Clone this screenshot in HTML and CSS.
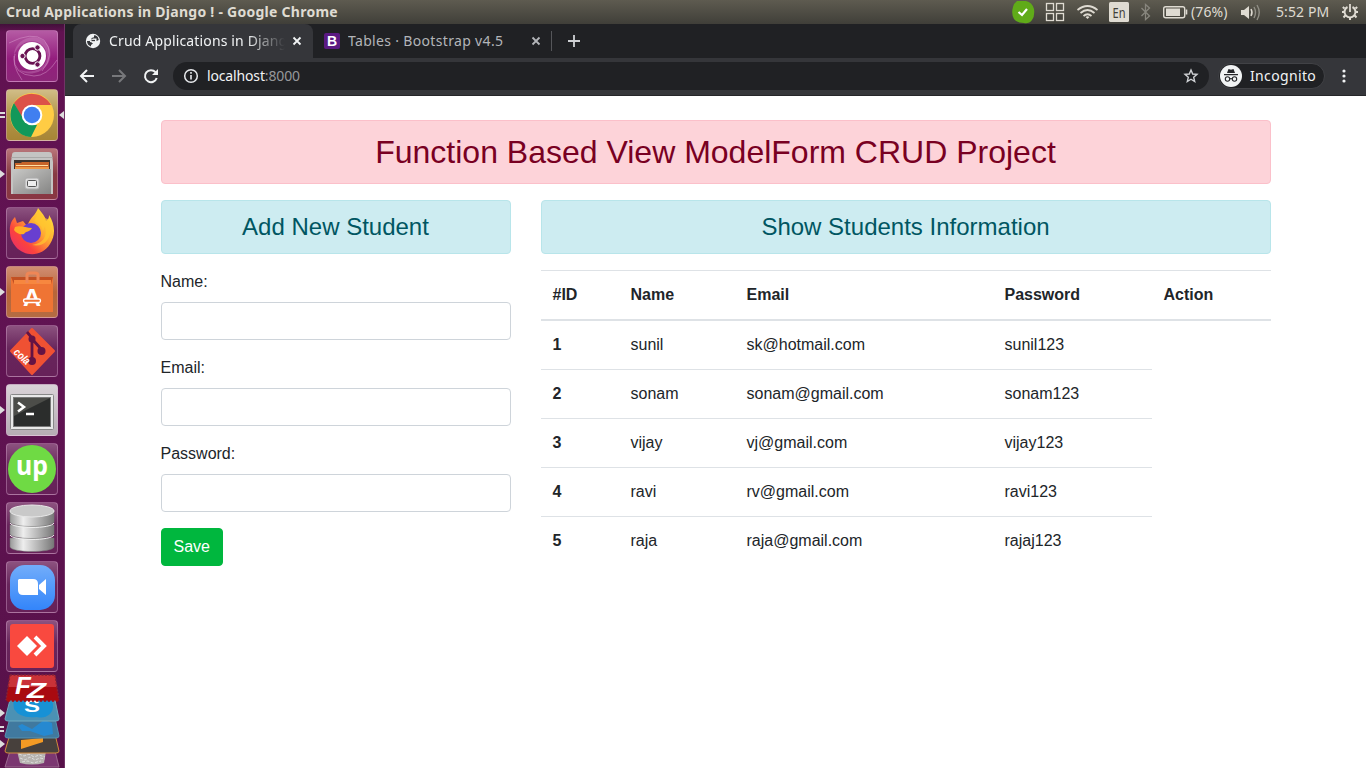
FILE: index.html
```html
<!DOCTYPE html>
<html lang="en">
<head>
<meta charset="utf-8">
<title>Crud Applications in Django !</title>
<link rel="stylesheet" href="styles.css">
</head>
<body>
<div class="desktop">
  <header class="panel">
    <span class="panel-title">Crud Applications in Django ! - Google Chrome</span>
    <svg class="panel-icons" width="180" height="24" viewBox="0 0 180 24">
      <path d="M6 1h9q6 1 8 8 1 7-2 11-3 4-8 3-7 0-10-4-3-5-1-12 1-4 4-6z" fill="#60ab19"/>
      <path d="M7.500 12l3.500 3 5-6" stroke="#fff" stroke-width="2.200" fill="none"/>
      <g fill="none" stroke="#dfdbd2" stroke-width="1.300"><rect x="35.500" y="3.500" width="7" height="7"/><rect x="45.500" y="3.500" width="7" height="7"/><rect x="35.500" y="13.500" width="7" height="7"/><rect x="45.500" y="13.500" width="7" height="7"/></g>
      <g fill="none" stroke="#dfdbd2" stroke-width="1.700"><path d="M66.500 10q10-8 20 0M69.500 13q7-6 14 0M72.500 16q4-3.500 8 0"/></g><path d="M74.500 17l2 2 2-2q-2-1.500-4 0z" fill="#dfdbd2"/>
      <rect x="98" y="2" width="20" height="20" rx="1.500" fill="#dfdbd2"/><text class="lang" x="101.500" y="17.500" textLength="13" lengthAdjust="spacingAndGlyphs">En</text>
      <path d="M130.500 8l8 8-4 3.500V4.500l4 3.500-8 8" fill="none" stroke="#88867e" stroke-width="1.300"/>
      <rect x="152.700" y="6.700" width="21" height="11" rx="2" fill="none" stroke="#dfdbd2" stroke-width="1.400"/><path d="M155 8.500h14v7.500h-14z" fill="#dfdbd2"/><path d="M175.500 9.500v5" stroke="#dfdbd2" stroke-width="1.600"/>
    </svg>
    <span class="battery">(76%)</span>
    <svg class="volume" width="22" height="24" viewBox="0 0 22 24"><path d="M1 10h3l5-4v13l-5-4H1z" fill="#dfdbd2"/><path d="M11 9q2 3.500 0 7" stroke="#dfdbd2" stroke-width="1.500" fill="none"/><path d="M14 7q3 5.500 0 11M17 5q4.500 7.500 0 15" stroke="#918f86" stroke-width="1.400" fill="none"/></svg>
    <span class="clock">5:52 PM</span>
    <svg class="gear" width="18" height="18" viewBox="0 0 18 18" fill="none" stroke="#dfdbd2"><path d="M6.500 4A5.500 5.500 0 1 0 11.500 4" stroke-width="2"/><path d="M9 1v8" stroke-width="1.800"/><path d="M3.500 5.500L1.800 4M3.200 9H1M4.300 12.500L2.500 14.500M9 14.500V17M13.700 12.500l1.800 2M14.800 9H17M14.500 5.500L16.200 4" stroke-width="2"/></svg>
  </header>
  <div class="workspace">
    <nav class="launcher">
      <div class="tile ubuntu"><svg viewBox="0 0 52 52"><path d="M8 25C9 5 38 0 44 20 48 40 24 50 12 39 20 44 40 42 41 27 41 8 16 4 8 25z" fill="#d592c9" opacity=".35"/><g fill="none" stroke="#dda5d3" stroke-width="1" opacity=".45"><path d="M3 13Q26 1 38 10 50 24 36 41M8 26Q7 45 28 46 41 46 51 30M16 50Q5 34 9 24"/></g><circle cx="26" cy="26" r="14" fill="#fff"/><circle cx="26.500" cy="26" r="7.400" fill="none" stroke="#691252" stroke-width="2.900"/><g fill="#691252" stroke="#fff"><circle cx="16.500" cy="26" r="2.700"/><circle cx="31.500" cy="17.500" r="2.700"/><circle cx="31.500" cy="34.500" r="2.700"/></g></svg></div>
      <div class="tile chrome"><i class="pips"></i><i class="active"></i><svg viewBox="0 0 52 52"><circle cx="26" cy="26" r="22" fill="#fc4"/><path d="M8 14A22 22 0 0 1 45 16H26L16 30z" fill="#dc5148"/><path d="M8 14l10 17 8 5 5 0-6 12A22 22 0 0 1 8 14z" fill="#12985a"/><circle cx="26" cy="26" r="10.300" fill="#fff"/><circle cx="26" cy="26" r="8.300" fill="#407ff0"/></svg></div>
      <div class="tile files"><i class="pip"></i><svg viewBox="0 0 52 52"><path d="M6 7q0-3 3-3h34q3 0 3 3l1 7v32H5V14z" fill="#c4c4c2"/><path d="M5.500 9.500h41" stroke="#a9a9a7"/><path d="M8 12h36v11H8z" fill="#3c332d"/><path d="M9 15h6l1-1h27v9H9z" fill="#c76429"/><path d="M10 17.500h32" stroke="#ffe0a2"/><path d="M9 19h34v3H9z" fill="#ed9847"/><path d="M7 21h38v25H7z" fill="url(#metal)"/><rect x="19" y="30" width="14" height="11" rx="2" fill="#ddd" stroke="#aaa"/><rect x="21.500" y="32.500" width="9" height="6" rx="1" fill="#eee" stroke="#555"/></svg></div>
      <div class="tile glass"><svg viewBox="0 0 52 52"><path d="M4 26C3 18 6 13 9 10l2 6 6-2 4 5C25 9 30 8 32 1c4 5 7 8 8 13 3-2 3-4 3-6 6 9 7 20 1 29-8 13-25 13-34 3C6 35 4 31 4 26z" fill="url(#fire)"/><circle cx="25" cy="26" r="10" fill="#683fd0"/><path d="M28 14q8 4 9 10l2-5q4 16-13 19 16 3 19-15 1-11-6-12-6-5-7-8-1 7-4 11z" fill="#ffc72f" opacity=".7"/><path d="M9 20c5-2 11 1 17 1-2 4-6 3-8 6-4 1-8-1-10-4" fill="#ffae26"/></svg></div>
      <div class="tile software"><i class="pip"></i><svg viewBox="0 0 52 52"><path d="M5 11h42v35H5z" fill="#ef7434"/><path d="M5 11h42l-2 7H8z" fill="#c25023"/><path d="M8 14h37v4H8z" fill="#f7873f"/><path d="M21 17V9q0-2 3-2h5q3 0 3 2v8" fill="none" stroke="#ef8656" stroke-width="3"/><text class="bag-letter" x="17" y="40" textLength="18" lengthAdjust="spacingAndGlyphs">A</text><rect x="17.500" y="33" width="17" height="3.500" rx="1.700" fill="#ef7434" stroke="#fff" stroke-width="1.400"/></svg></div>
      <div class="tile glass"><svg viewBox="0 0 52 52"><path d="M26 4l22 22-22 23L5 26z" fill="#ef5133" stroke="#ef5133" stroke-width="2" stroke-linejoin="round"/><path d="M21 7l5 6v23M27 15l9 10" fill="none" stroke="#651344" stroke-width="2.800"/><circle cx="26" cy="14" r="3.500" fill="#651344"/><circle cx="35.500" cy="26" r="4" fill="#651344"/><circle cx="26" cy="36" r="4" fill="#651344"/><text class="cola" x="7" y="28" transform="rotate(43 7 28)" textLength="18" lengthAdjust="spacingAndGlyphs">cola</text></svg></div>
      <div class="tile terminal"><i class="pip"></i><svg viewBox="0 0 52 52"><rect x="4.500" y="10.500" width="43" height="35" rx="1" fill="#e8e8e8" stroke="#888"/><rect x="7.500" y="13.500" width="37" height="29" fill="#2b2d2c" stroke="#777"/><path d="M8 14h36L8 32z" fill="#62625e" opacity=".6"/><path d="M12 18.500l6 4.500-6 4.500M20 30h8" fill="none" stroke="#fff" stroke-width="2.500"/></svg></div>
      <div class="tile glass"><svg viewBox="0 0 52 52"><circle cx="26" cy="26" r="24" fill="#6fda44"/><text class="up" x="10" y="32" textLength="32" lengthAdjust="spacingAndGlyphs">up</text></svg></div>
      <div class="tile glass"><svg viewBox="0 0 52 52"><g fill="url(#steel)" stroke="#777" stroke-width=".5"><path d="M4 36v9c2 6 42 6 44 0v-9z"/><path d="M4 23v9c2 6 42 6 44 0v-9z"/><path d="M4 9v11c2 6 42 6 44 0V9z"/></g><g fill="none" stroke="#eee"><path d="M4 21c3 6 41 6 44 0M4 33c3 6 41 6 44 0"/></g><ellipse cx="26" cy="9" rx="22" ry="6" fill="#c9c9c9" stroke="#e8e8e8"/></svg></div>
      <div class="tile glass"><svg viewBox="0 0 52 52"><rect x="4" y="4" width="45" height="45" rx="15" fill="url(#blue)"/><path d="M13 18h14q5 0 5 5v11H17q-5 0-5-5V19z" fill="#fff"/><path d="M33 24l7-6v16l-7-6z" fill="#fff"/></svg></div>
      <div class="tile glass"><svg viewBox="0 0 52 52"><rect x="4" y="4" width="44" height="44" rx="3" fill="#f9493f"/><path d="M11 26l10-10 10 10-10 10z" fill="#fff"/><path d="M29 17l9 9-9 9" fill="none" stroke="#fff" stroke-width="4"/></svg></div>
      <svg class="folded" width="65" height="96" viewBox="0 0 65 96">
        <path d="M10 78h45l4 16H5z" fill="#7b3771" stroke="#9b698f"/><path d="M17 78h29l-2 12q-12 3-24 0z" fill="#b7b3b0"/><path d="M19 81l5 2 5-2 5 3 5-2 6 2M20 85l5 2 5-3 5 3 5-2 5 1M22 89l6-1 5 2 8-2" stroke="#ddd" fill="none" stroke-dasharray="3 1.500"/>
        <path d="M10 61h45l4 17q0 2-3 2H8q-3 0-3-2z" fill="#47403c" stroke="#d38a3c"/><path d="M21 67l22-2v4l-22 7z" fill="#f49a24"/>
        <path d="M10 45h45l4 18q0 2-3 2H8q-3 0-3-2z" fill="#40799f" stroke="#5692af"/><path d="M18 53l4-2 10 5 12-9 8 3 1 11-9 2-14-5-8 0z" fill="#2689d1"/>
        <path d="M10 27h45l4 19q0 2-3 2H8q-3 0-3-2z" fill="#4b91b4" stroke="#70abc0"/><path d="M13 27h39q3 9-2 14-6 5-13 3-17 2-23-8z" fill="#1791d5"/><text class="skype" x="24" y="39" textLength="16" lengthAdjust="spacingAndGlyphs">S</text>
        <path d="M10 2h45l4 25q-2 4-4 0-2 4-4 0-2 4-4 0-2 4-4 0-2 4-4 0-2 4-4 0-2 4-4 0-2 4-4 0-2 4-4 0-2 4-4 0-2 4-4 0-2 4-4 0-2 4-5 0z" fill="#a90a10"/><path d="M10 2h45l2 12H8z" fill="#c93238"/><path d="M10 2h45l4 25M10 2L6 27" fill="none" stroke="#842236" stroke-width="1.500" stroke-dasharray="2 1.500"/>
        <text class="fz" transform="translate(15 23) scale(1.080 1)" x="0" y="-2">F</text><text class="fz fz-z" x="27" y="25" textLength="19" lengthAdjust="spacingAndGlyphs">Z</text>
        <g fill="#ddd"><path d="M0 36l5 4-5 4zM0 67l5 4-5 4z"/><path d="M0 53h4v2H0zM0 57h4v2H0z"/></g>
      </svg>
      <svg class="defs" width="0" height="0"><defs><linearGradient id="metal" x2="1" y2="1"><stop stop-color="#c8c8c6"/><stop offset="1" stop-color="#858584"/></linearGradient><linearGradient id="steel"><stop stop-color="#999"/><stop offset=".3" stop-color="#eee"/><stop offset="1" stop-color="#777"/></linearGradient><linearGradient id="fire" x1="1" x2="0" y2="1"><stop stop-color="#fff13c"/><stop offset=".4" stop-color="#ffac32"/><stop offset=".7" stop-color="#fb423e"/><stop offset="1" stop-color="#e42779"/></linearGradient><linearGradient id="blue" x2="0" y2="1"><stop stop-color="#72adfa"/><stop offset="1" stop-color="#3385fa"/></linearGradient></defs></svg>
    </nav>
    <section class="browser">
      <div class="tabstrip">
        <div class="tab selected"><svg width="16" height="16" viewBox="0 0 16 16"><circle cx="8" cy="8" r="7.200" fill="#f1f3f4"/><path d="M9 2.200v2L6.500 5v2L4.500 8H2q0 4 4 5.500V12l2-1.500L6.500 9l4-.5L13.800 7l-1-3-2-1.500z" fill="#35363a"/><path d="M8 5.500h3.500v3H13v3l-2 1.500-2.500.500V11L7 9.500 5 9V7.500z" fill="#f1f3f4"/><path d="M6.500 7.500h3.500" stroke="#35363a" stroke-width="1.300"/></svg><span class="tab-text fade">Crud Applications in Django</span><svg class="close" width="10" height="10" viewBox="0 0 10 10"><path d="M1.500 1.500l7 7m0-7l-7 7"/></svg></div>
        <div class="tab other"><b class="bootstrap">B</b><span class="tab-text">Tables · Bootstrap v4.5</span><svg class="close" width="10" height="10" viewBox="0 0 10 10"><path d="M1.500 1.500l7 7m0-7l-7 7"/></svg></div>
        <svg class="plus" width="12" height="12" viewBox="0 0 12 12"><path d="M6 0v12M0 6h12" stroke="#cfd1d4" stroke-width="1.800"/></svg>
      </div>
      <div class="toolbar">
        <svg class="nav-icons" width="86" height="16" viewBox="0 0 86 16" fill="none" stroke-width="2"><path d="M15 8H2m6-6L2 8l6 6" stroke="#f1f3f4"/><path d="M33 8h13m-6-6l6 6-6 6" stroke="#77787b"/><path d="M76.500 4.200A6 6 0 1 0 77.700 10" stroke="#f1f3f4"/><path d="M79 1v6h-6z" fill="#f1f3f4"/></svg>
        <div class="omnibox"><svg width="16" height="16" viewBox="0 0 16 16"><circle cx="8" cy="8" r="6.300" fill="none" stroke="#e8eaed" stroke-width="1.500"/><path d="M8 7v4.500M8 4v1.700" stroke="#e8eaed" stroke-width="1.600"/></svg><span class="url">localhost<i>:8000</i></span><svg class="star" width="16" height="16" viewBox="0 0 16 16"><path d="M8 2l1.700 4 4.300.400-3.300 2.900 1 4.200L8 11.200l-3.700 2.300 1-4.200L2 6.400 6.300 6z" fill="none" stroke="#cfd1d4" stroke-width="1.400"/></svg></div>
        <div class="incognito"><svg width="22" height="22" viewBox="0 0 22 22"><circle cx="11" cy="11" r="11" fill="#f1f3f4"/><path d="M7 8l1.500-4 2.500.700L13.500 4 15 8zM4 9h14v1.300H4z" fill="#25262a"/><g fill="none" stroke="#25262a" stroke-width="1.100"><circle cx="7.500" cy="14" r="2.200"/><circle cx="14.500" cy="14" r="2.200"/><path d="M9.700 14q1.300-1 2.600 0"/></g></svg><span>Incognito</span></div>
        <svg class="more" width="4" height="14" viewBox="0 0 4 14" fill="#f1f3f4"><circle cx="2" cy="2" r="1.600"/><circle cx="2" cy="7" r="1.600"/><circle cx="2" cy="12" r="1.600"/></svg>
      </div>
      <main class="page">
        <div class="container">
          <h2 class="alert danger">Function Based View ModelForm CRUD Project</h2>
          <div class="row">
            <form class="student-form">
              <h4 class="alert info">Add New Student</h4>
              <label for="name">Name:</label><input id="name" type="text">
              <label for="email">Email:</label><input id="email" type="email">
              <label for="password">Password:</label><input id="password" type="password">
              <button type="button">Save</button>
            </form>
            <section>
              <h4 class="alert info">Show Students Information</h4>
              <table>
                <colgroup><col class="c-id"><col class="c-name"><col class="c-email"><col class="c-pass"><col class="c-action"></colgroup>
                <thead><tr><th>#ID</th><th>Name</th><th>Email</th><th>Password</th><th>Action</th></tr></thead>
                <tbody>
                  <tr><th>1</th><td>sunil</td><td>sk@hotmail.com</td><td>sunil123</td></tr>
                  <tr><th>2</th><td>sonam</td><td>sonam@gmail.com</td><td>sonam123</td></tr>
                  <tr><th>3</th><td>vijay</td><td>vj@gmail.com</td><td>vijay123</td></tr>
                  <tr><th>4</th><td>ravi</td><td>rv@gmail.com</td><td>ravi123</td></tr>
                  <tr><th>5</th><td>raja</td><td>raja@gmail.com</td><td>rajaj123</td></tr>
                </tbody>
              </table>
            </section>
          </div>
        </div>
      </main>
    </section>
  </div>
</div>
</body>
</html>
```
FILE: styles.css
```css
* { box-sizing: border-box; }
body { margin: 0; overflow: hidden; font-family: "Liberation Sans", Arial, sans-serif; }
svg { display: block; flex: none; }
.desktop { width: 1366px; height: 768px; display: flex; flex-direction: column; overflow: hidden; }
.panel { height: 24px; flex: none; display: flex; align-items: center; background: linear-gradient(#5e5b50, #403f39); color: #dfdbd2; font: 14px/24px "Noto Sans", sans-serif; white-space: nowrap; padding-left: 6px; }
.panel-title { width: 1005px; font-weight: 700; font-size: 14px; letter-spacing: .26px; }
.panel-icons { flex: none; }
.lang { font: 14px "Noto Sans", sans-serif; fill: #403f39; }
.battery { width: 49px; font-size: 14px; letter-spacing: .1px; }
.volume { margin-right: 14px; }
.clock { width: 65px; letter-spacing: .1px; }
.workspace { flex: 1; display: flex; min-height: 0; }
.launcher { width: 65px; flex: none; display: flex; flex-direction: column; padding: 6px 0 0 6px; gap: 7px; background: linear-gradient(#42103a, #611251 8px, #601352 50%, #571149); border-right: 1px solid #713466; }
.tile { position: relative; width: 52px; height: 52px; flex: none; border: 1px solid rgba(220,170,210,.4); border-radius: 4px; }
.tile > svg { width: 52px; height: 52px; margin: -1px; }
.glass { background: linear-gradient(#8c527f, #68265c 45%, #672159); }
.ubuntu { background: linear-gradient(#b55ba4, #941e7e 55%, #8c2678); }
.chrome { background: linear-gradient(#d1bd87, #b3964a 50%, #a78536); }
.files { background: linear-gradient(#b87579, #873b43 50%, #893642); }
.software { background: linear-gradient(#d18e72, #b86539 50%, #b46c43); }
.terminal { background: linear-gradient(#d9d2d7, #b6adb4); }
.pip, .pips, .active { position: absolute; left: -7px; top: 21px; border: 4px solid transparent; border-left: 5px solid #ddd; border-right: 0; }
.pips { border: 0; width: 5px; height: 6px; top: 22px; border-top: 2px solid #ddd; border-bottom: 2px solid #ddd; }
.active { left: 52px; border-left: 0; border-right: 5px solid #ddd; }
.folded { margin: -6px 0 0 -6px; }
.cola { font: italic bold 11px "Liberation Sans", sans-serif; fill: #fff; }
.bag-letter { font: bold 24px "Liberation Sans", sans-serif; fill: #fff; }
.up { font: bold 27px "Noto Sans", sans-serif; fill: #fff; }
.fz { font: italic bold 24px "Liberation Sans", sans-serif; fill: #fff; }
.fz-z { font-size: 22px; }
.skype { font: bold 17px "Liberation Sans", sans-serif; fill: #fff; }
.defs { height: 0; }
.browser { flex: 1; display: flex; flex-direction: column; min-width: 0; background: #fff; }
.tabstrip { height: 34px; display: flex; align-items: center; background: #202124; padding-left: 8px; font: 14px/34px "Noto Sans", sans-serif; flex: none; }
.tab { height: 34px; display: flex; align-items: center; white-space: nowrap; }
.selected { width: 240px; padding: 0 11px 0 12px; background: #35363a; border-radius: 8px 8px 0 0; color: #f1f3f4; }
.tab-text { margin-left: 8px; flex: 1; overflow: hidden; letter-spacing: .33px; }
.fade { letter-spacing: .15px; margin-right: 7px; -webkit-mask-image: linear-gradient(to right, #000 78%, transparent); mask-image: linear-gradient(to right, #000 78%, transparent); }
.close { stroke: #f1f3f4; stroke-width: 1.8; }
.other { width: 239px; padding: 0 10px 0 11px; height: 20px; border-right: 1px solid #55565a; color: #b3b5b9; }
.other .close { stroke: #b3b5b9; }
.bootstrap { width: 16px; height: 16px; border-radius: 2px; background: #5b1a82; color: #fff; font: bold 14px/16px "Liberation Sans", sans-serif; text-align: center; }
.plus { margin-left: 16px; }
.toolbar { height: 38px; flex: none; display: flex; align-items: center; background: #35363a; border-bottom: 1px solid #252629; padding: 0 20px 1px 14px; color: #f1f3f4; font: 14px/20px "Noto Sans", sans-serif; }
.nav-icons { margin-right: 8px; }
.omnibox { width: 1036px; height: 28px; border-radius: 14px; background: #202124; display: flex; align-items: center; padding: 0 10px; }
.url { margin-left: 8px; flex: 1; letter-spacing: -.15px; }
.url i { font-style: normal; color: #96989b; }
.incognito { width: 107px; height: 26px; border-radius: 13px; background: #202124; border: 1px solid #414246; margin-left: 9px; display: flex; align-items: center; padding-left: 1px; gap: 8px; letter-spacing: .35px; }
.more { margin-left: 17px; }
.page { flex: 1; padding-top: 24px; color: #212529; font-size: 16px; line-height: 24px; }
.container { width: 1110px; margin: 0 auto; }
.alert { margin: 0 0 16px; padding: 12px 20px; border: 1px solid; border-radius: 4px; text-align: center; font-weight: 400; }
.danger { background: #fdd3d9; border-color: #fbc0ca; color: #790022; font-size: 32px; line-height: 38px; }
.info { background: #cdecf1; border-color: #b8e5ea; color: #005662; font-size: 24px; line-height: 28px; }
.row { display: grid; grid-template-columns: 350px 730px; gap: 30px; }
.student-form label { display: block; margin-bottom: 8px; }
.student-form input { display: block; width: 100%; height: 38px; border: 1px solid #ced4da; border-radius: 4px; background: #fff; margin: 0 0 16px; padding: 6px 12px; }
button { display: block; height: 38px; border: 1px solid #00b73e; border-radius: 4px; padding: 6px 12px; background: #00b73e; color: #fff; font: 16px/24px "Liberation Sans", Arial, sans-serif; }
table { width: 730px; table-layout: fixed; border-spacing: 0; text-align: left; }
.c-id { width: 78px; } .c-name { width: 116px; } .c-email { width: 258px; } .c-pass { width: 159px; } .c-action { width: 119px; }
th, td { padding: 12px; border-top: 1px solid #dee2e6; }
thead th { border-bottom: 2px solid #dee2e6; }
tbody tr:first-child > * { border-top: 0; }
```
